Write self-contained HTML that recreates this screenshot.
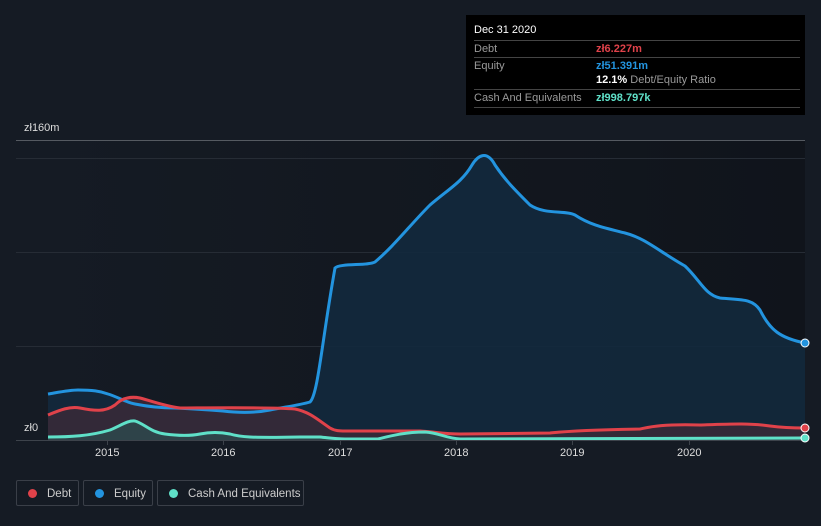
<!DOCTYPE html><html><head><meta charset="utf-8"><style>
body{margin:0;width:821px;height:526px;background:#151b24;font-family:"Liberation Sans",sans-serif;overflow:hidden;position:relative}
.t{position:absolute;font-size:11px;color:#ddd}
.tip{position:absolute;left:466px;top:15px;width:339px;height:100px;background:#000}
.row{position:absolute;left:8px;width:326px;border-top:1px solid #444;font-size:11px;color:#9a9a9a;height:17px;line-height:16px}
.leg{position:absolute;top:480px;height:26px;border:1px solid #3a3f48;border-radius:2px;font-size:11.5px;color:#ccc;line-height:26px;box-sizing:border-box;white-space:nowrap}
.dot{display:inline-block;width:9px;height:9px;border-radius:50%;margin:0 10px 0 11px;vertical-align:-1px}
</style></head><body>
<svg width="821" height="526" style="position:absolute;left:0;top:0">
<defs>
<linearGradient id="pg" x1="0" x2="1"><stop offset="0" stop-color="#151b24"/><stop offset="1" stop-color="#10141b"/></linearGradient>
</defs>
<rect x="48" y="140" width="757" height="300" fill="url(#pg)"/>
<line x1="16" y1="140.5" x2="805" y2="140.5" stroke="#555a61"/>
<line x1="16" y1="158.5" x2="805" y2="158.5" stroke="#262c35"/>
<line x1="16" y1="252.5" x2="805" y2="252.5" stroke="#262c35"/>
<line x1="16" y1="346.5" x2="805" y2="346.5" stroke="#262c35"/>
<path d="M48,394 C60,392 70,390 78,390 C92,390 100,391 108,394 C118,397 125,402 135,404 C150,407 160,408 175,408 C195,409 210,410 223,411 C240,413 255,413 270,410 C285,407 300,405 310,402 C318,395 322,340 335,268 C340,263 368,266 375,262 C395,245 410,225 430,205 C450,188 462,182 472,165 C478,155 487,150 495,165 C505,180 515,190 530,205 C545,215 565,210 575,215 C590,225 605,228 625,233 C645,238 660,252 685,266 C700,280 705,295 720,298 C740,300 752,298 760,310 C770,330 780,338 805,343 L805,440 L48,440Z" fill="#13293d" opacity="0.9"/>
<path d="M48,415 C60,410 70,406 80,408 C95,411 105,412 115,405 C122,398 130,396 140,398 C155,402 165,406 180,408 C200,408 270,407 295,409 C310,412 318,420 330,428 C335,431 340,431 345,431 L420,431 C435,432 445,434 460,434 L550,433 C560,432 575,430 640,429 C650,427 660,424 700,425 C730,424 750,423 770,426 C785,428 795,428 805,428 L805,440 L48,440Z" fill="#3a2a38" opacity="0.85"/>
<path d="M48,437 C70,437 90,436 110,430 C120,426 128,420 135,421 C145,424 150,432 165,434 C180,436 190,436 200,434 C210,432 220,432 230,434 C240,437 250,438 300,437 L320,437 C330,438 335,439 345,439 L378,439 C390,436 405,432 425,432 C440,433 445,438 460,439 L805,438 L805,440 L48,440Z" fill="#2d4a4d" opacity="0.8"/>
<path d="M48,394 C60,392 70,390 78,390 C92,390 100,391 108,394 C118,397 125,402 135,404 C150,407 160,408 175,408 C195,409 210,410 223,411 C240,413 255,413 270,410 C285,407 300,405 310,402 C318,395 322,340 335,268 C340,263 368,266 375,262 C395,245 410,225 430,205 C450,188 462,182 472,165 C478,155 487,150 495,165 C505,180 515,190 530,205 C545,215 565,210 575,215 C590,225 605,228 625,233 C645,238 660,252 685,266 C700,280 705,295 720,298 C740,300 752,298 760,310 C770,330 780,338 805,343" fill="none" stroke="#2394df" stroke-width="3"/>
<path d="M48,415 C60,410 70,406 80,408 C95,411 105,412 115,405 C122,398 130,396 140,398 C155,402 165,406 180,408 C200,408 270,407 295,409 C310,412 318,420 330,428 C335,431 340,431 345,431 L420,431 C435,432 445,434 460,434 L550,433 C560,432 575,430 640,429 C650,427 660,424 700,425 C730,424 750,423 770,426 C785,428 795,428 805,428" fill="none" stroke="#e0424a" stroke-width="3"/>
<path d="M48,437 C70,437 90,436 110,430 C120,426 128,420 135,421 C145,424 150,432 165,434 C180,436 190,436 200,434 C210,432 220,432 230,434 C240,437 250,438 300,437 L320,437 C330,438 335,439 345,439 L378,439 C390,436 405,432 425,432 C440,433 445,438 460,439 L805,438" fill="none" stroke="#5fe0c8" stroke-width="3"/>
<line x1="16" y1="440.5" x2="805" y2="440.5" stroke="#3d434b"/>
<g stroke="#3d434b"><line x1="107.5" y1="440" x2="107.5" y2="445"/><line x1="223.5" y1="440" x2="223.5" y2="445"/><line x1="340.5" y1="440" x2="340.5" y2="445"/><line x1="456.5" y1="440" x2="456.5" y2="445"/><line x1="572.5" y1="440" x2="572.5" y2="445"/><line x1="689.5" y1="440" x2="689.5" y2="445"/></g>
<circle cx="805" cy="343" r="4" fill="#2394df" stroke="#fff" stroke-width="1"/>
<circle cx="805" cy="428" r="4" fill="#e0424a" stroke="#fff" stroke-width="1"/>
<circle cx="805" cy="438" r="4" fill="#5fe0c8" stroke="#fff" stroke-width="1"/>
</svg>
<div class="t" style="left:24px;top:122px">zł160m</div>
<div class="t" style="left:24px;top:422px">zł0</div>
<div class="t" style="left:95px;top:447px">2015</div>
<div class="t" style="left:211px;top:447px">2016</div>
<div class="t" style="left:328px;top:447px">2017</div>
<div class="t" style="left:444px;top:447px">2018</div>
<div class="t" style="left:560px;top:447px">2019</div>
<div class="t" style="left:677px;top:447px">2020</div>
<div class="tip">
<div style="position:absolute;left:8px;top:9px;font-size:11px;color:#fff">Dec 31 2020</div>
<div class="row" style="top:25px">Debt<span style="position:absolute;left:122px;color:#e0424a;font-weight:bold">zł6.227m</span></div>
<div class="row" style="top:42px">Equity<span style="position:absolute;left:122px;color:#2394df;font-weight:bold">zł51.391m</span></div>
<div style="position:absolute;left:130px;top:59px;font-size:11px;color:#9a9a9a"><b style="color:#fff">12.1%</b> Debt/Equity Ratio</div>
<div class="row" style="top:74px">Cash And Equivalents<span style="position:absolute;left:122px;color:#5fe0c8;font-weight:bold">zł998.797k</span></div>
<div style="position:absolute;left:8px;top:92px;width:326px;border-top:1px solid #444"></div>
</div>
<div class="leg" style="left:16px;width:63px"><span class="dot" style="background:#e0424a"></span>Debt</div>
<div class="leg" style="left:83px;width:70px"><span class="dot" style="background:#2394df"></span>Equity</div>
<div class="leg" style="left:157px;width:147px"><span class="dot" style="background:#5fe0c8"></span>Cash And Equivalents</div>
</body></html>
